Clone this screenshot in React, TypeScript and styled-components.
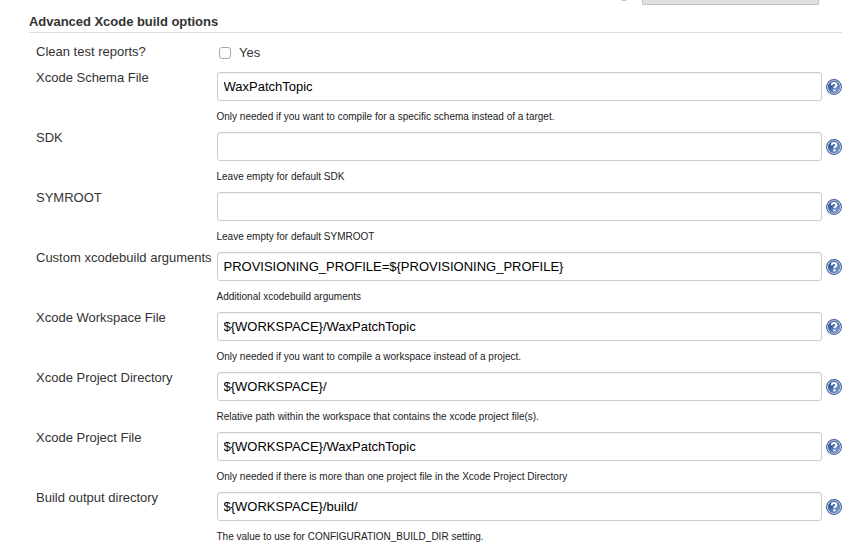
import React from "react";
import styled, { createGlobalStyle } from "styled-components";

const GlobalStyle = createGlobalStyle`
  * { box-sizing: border-box; }
  html, body { margin: 0; background: #fff; overflow: hidden; }
  body { font-family: "Liberation Sans", Helvetica, Arial, sans-serif; font-size: 13px; color: #333; }
`;

const Page = styled.main`
  width: 857px;
  height: 551px;
  overflow: hidden;
  background: #fff;
`;

const PreviousSection = styled.div`
  display: flex;
  justify-content: flex-end;
  align-items: flex-end;
  gap: 11px;
  height: 5px;
  padding-right: 38px;
  overflow: hidden;
`;

const RadioEdge = styled.span`
  width: 14px;
  height: 14px;
  margin-bottom: 4px;
  border: 1px solid #bbb;
  border-radius: 50%;
`;

const ButtonEdge = styled.span`
  width: 177px;
  height: 28px;
  border: 1px solid #c2c2c2;
  border-radius: 1px;
  background: #e0e0e0;
`;

const SectionTitle = styled.h2`
  height: 28px;
  margin: 0 15px 0 29px;
  padding-top: 9px;
  border-bottom: 1px solid #ddd;
  font-size: 13px;
  line-height: 15px;
  font-weight: bold;
  letter-spacing: -0.03px;
`;

const Form = styled.form`
  display: flex;
  flex-direction: column;
  padding: 11px 15px 0 36px;
`;

const Row = styled.div<{ $height: number }>`
  display: grid;
  grid-template-columns: 181px 605px 20px;
  align-items: start;
  height: ${(p) => p.$height}px;
`;

const Label = styled.label<{ $raised?: boolean }>`
  margin-top: ${(p) => (p.$raised ? -2 : 0)}px;
  line-height: 15px;
  white-space: nowrap;
`;

const CheckLabel = styled.label`
  display: flex;
  align-items: flex-start;
  gap: 8px;
  padding: 1px 0 0 2px;
  line-height: 15px;
`;

const Checkbox = styled.input`
  appearance: none;
  width: 12px;
  height: 12px;
  margin: 2px 0 0;
  border: 1px solid #aaa;
  border-radius: 3px;
  background: linear-gradient(#fff, #fafafa);
`;

const Field = styled.div`
  display: flex;
  flex-direction: column;
`;

const TextInput = styled.input`
  width: 605px;
  height: 29px;
  padding: 0 5.5px 1px;
  border: 1px solid #ccc;
  border-radius: 3px;
  box-shadow: inset 0 1px 1px rgba(0, 0, 0, 0.05);
  background: #fff;
  color: #000;
  font: 13px "Liberation Sans", Helvetica, Arial, sans-serif;
  outline: none;
`;

const Hint = styled.small`
  margin: 10px 0 0 -0.5px;
  font-size: 10px;
  line-height: 12px;
  color: #222;
  white-space: nowrap;
`;

const HelpButton = styled.button`
  display: flex;
  width: 16px;
  height: 16px;
  margin: 7px 0 0 4px;
  padding: 0;
  border: 0;
  background: none;
`;

const HelpIcon = () => (
  <svg width="16" height="16" viewBox="0 0 16 16">
    <defs>
      <linearGradient id="helpFill" x1="0" y1="0" x2="1" y2="1">
        <stop offset="0.15" stopColor="#23468c" />
        <stop offset="0.85" stopColor="#7c9fd0" />
      </linearGradient>
    </defs>
    <circle cx="8" cy="8" r="7.4" fill="#fff" stroke="#3c5f9d" strokeWidth="1.1" />
    <circle cx="8" cy="8" r="5.9" fill="url(#helpFill)" stroke="#3b5f9f" strokeWidth="0.5" />
    <path d="M5.7 6.2C5.7 4.5 6.7 3.9 8 3.9c1.4 0 2.4.7 2.4 2C10.4 7.4 8.4 7.4 8.4 9.3" fill="none" stroke="#fff" strokeWidth="2" />
    <rect x="7.3" y="10.4" width="2.1" height="1.9" fill="#fff" />
  </svg>
);

const fields = [
  { label: "Xcode Schema File", value: "WaxPatchTopic", hint: "Only needed if you want to compile for a specific schema instead of a target." },
  { label: "SDK", value: "", hint: "Leave empty for default SDK" },
  { label: "SYMROOT", value: "", hint: "Leave empty for default SYMROOT" },
  { label: "Custom xcodebuild arguments", value: "PROVISIONING_PROFILE=${PROVISIONING_PROFILE}", hint: "Additional xcodebuild arguments" },
  { label: "Xcode Workspace File", value: "${WORKSPACE}/WaxPatchTopic", hint: "Only needed if you want to compile a workspace instead of a project." },
  { label: "Xcode Project Directory", value: "${WORKSPACE}/", hint: "Relative path within the workspace that contains the xcode project file(s)." },
  { label: "Xcode Project File", value: "${WORKSPACE}/WaxPatchTopic", hint: "Only needed if there is more than one project file in the Xcode Project Directory" },
  { label: "Build output directory", value: "${WORKSPACE}/build/", hint: "The value to use for CONFIGURATION_BUILD_DIR setting." },
];

export default function App() {
  return (
    <Page>
      <GlobalStyle />
      <PreviousSection>
        <RadioEdge />
        <ButtonEdge />
      </PreviousSection>
      <SectionTitle>Advanced Xcode build options</SectionTitle>
      <Form>
        <Row $height={28}>
          <Label htmlFor="clean">Clean test reports?</Label>
          <CheckLabel>
            <Checkbox id="clean" type="checkbox" />
            Yes
          </CheckLabel>
        </Row>
        {fields.map((f, i) => (
          <Row key={f.label} $height={60}>
            <Label htmlFor={`field-${i}`} $raised>{f.label}</Label>
            <Field>
              <TextInput id={`field-${i}`} defaultValue={f.value} />
              <Hint>{f.hint}</Hint>
            </Field>
            <HelpButton type="button" aria-label="Help">
              <HelpIcon />
            </HelpButton>
          </Row>
        ))}
      </Form>
    </Page>
  );
}
